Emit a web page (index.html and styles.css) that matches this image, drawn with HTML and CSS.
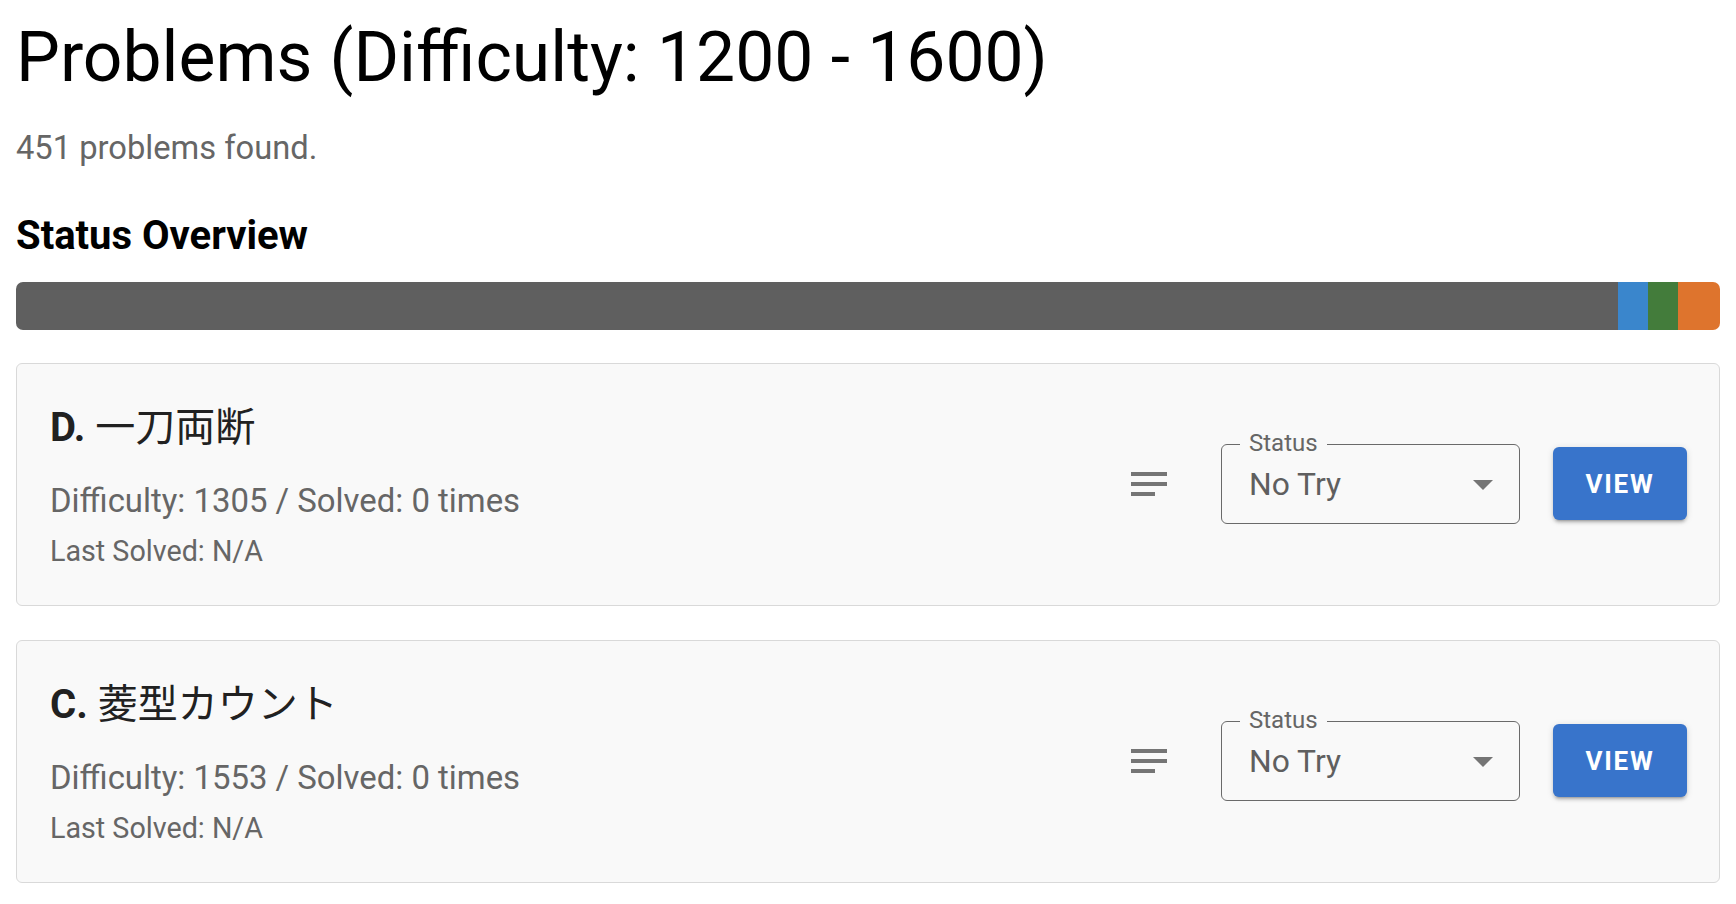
FILE: index.html
```html
<!DOCTYPE html>
<html lang="ja">
<head>
<meta charset="utf-8">
<title>Problems</title>
<link rel="stylesheet" href="styles.css">
</head>
<body>
<main class="page">
  <h1 class="page-title">Problems (Difficulty: 1200 - 1600)</h1>
  <p class="found">451 problems found.</p>
  <h2 class="section-title">Status Overview</h2>
  <div class="status-bar">
    <div class="seg seg-notry" style="width:94.01%"></div>
    <div class="seg seg-blue" style="width:1.77%"></div>
    <div class="seg seg-green" style="width:1.77%"></div>
    <div class="seg seg-orange" style="width:2.45%"></div>
  </div>

  <div class="card">
    <div class="card-info">
      <div class="card-title"><span class="pid">D.</span> 一刀両断</div>
      <div class="card-meta">Difficulty: 1305 / Solved: 0 times</div>
      <div class="card-last">Last Solved: N/A</div>
    </div>
    <div class="card-actions">
      <span class="notes-icon">
        <svg viewBox="0 0 24 24" width="48" height="48"><path d="M3 18h12v-2H3v2zM3 6v2h18V6H3zm0 7h18v-2H3v2z" fill="#757575"/></svg>
      </span>
      <div class="select">
        <span class="select-label">Status</span>
        <span class="select-value">No Try</span>
        <span class="select-arrow"></span>
      </div>
      <button class="view-btn">VIEW</button>
    </div>
  </div>

  <div class="card">
    <div class="card-info">
      <div class="card-title"><span class="pid">C.</span> 菱型カウント</div>
      <div class="card-meta">Difficulty: 1553 / Solved: 0 times</div>
      <div class="card-last">Last Solved: N/A</div>
    </div>
    <div class="card-actions">
      <span class="notes-icon">
        <svg viewBox="0 0 24 24" width="48" height="48"><path d="M3 18h12v-2H3v2zM3 6v2h18V6H3zm0 7h18v-2H3v2z" fill="#757575"/></svg>
      </span>
      <div class="select">
        <span class="select-label">Status</span>
        <span class="select-value">No Try</span>
        <span class="select-arrow"></span>
      </div>
      <button class="view-btn">VIEW</button>
    </div>
  </div>
</main>
</body>
</html>
```
FILE: styles.css
```css
* { box-sizing: border-box; }
html, body { margin: 0; padding: 0; background: #ffffff; }
body {
  font-family: Roboto, "Noto Sans CJK JP", sans-serif;
  color: #000;
}
.page { padding: 16px 16px 0 16px; }

.page-title {
  margin: 0;
  font-size: 69.6px;
  line-height: 82px;
  font-weight: 400;
  color: #000;
}
.found {
  margin: 30px 0 0 0;
  font-size: 32.7px;
  line-height: 40px;
  color: #666;
}
.section-title {
  margin: 45px 0 0 0;
  font-size: 40px;
  line-height: 46px;
  font-weight: 700;
  color: #000;
}
.status-bar {
  margin-top: 23px;
  height: 48px;
  display: flex;
  border-radius: 7px;
  overflow: hidden;
}
.seg { height: 100%; }
.seg-notry { background: #5f5f5f; }
.seg-blue { background: #3a86cc; }
.seg-green { background: #437c3b; }
.seg-orange { background: #de742d; }

.card {
  margin-top: 33px;
  display: flex;
  align-items: center;
  justify-content: space-between;
  background: #f9f9f9;
  border: 1.5px solid #d9d9d9;
  border-radius: 6px;
  padding: 40px 32px 36px 33px;
}
.card + .card { margin-top: 34px; }

.card-title {
  font-size: 40px;
  line-height: 48px;
  color: #212121;
}
.pid { font-weight: 700; }
.card-meta {
  margin-top: 29px;
  font-size: 32.9px;
  line-height: 40px;
  color: #666;
}
.card-last {
  margin-top: 12px;
  font-size: 28.7px;
  line-height: 36px;
  color: #666;
}

.card-actions {
  display: flex;
  align-items: center;
  margin-bottom: 6px;
}
.notes-icon {
  width: 48px;
  height: 48px;
  display: flex;
}
.select {
  position: relative;
  margin-left: 48px;
  width: 299px;
  height: 80px;
  border: 1.5px solid #6a6a6a;
  border-radius: 6px;
  display: flex;
  align-items: center;
  padding-left: 27px;
}
.select-label {
  position: absolute;
  left: 18px;
  top: -17px;
  padding: 0 9px;
  background: #f9f9f9;
  font-size: 24px;
  line-height: 30px;
  color: #666;
}
.select-value {
  font-size: 31.8px;
  line-height: 40px;
  color: #5f5f5f;
  margin-top: 0;
}
.select-arrow {
  position: absolute;
  right: 26px;
  top: 35px;
  width: 0;
  height: 0;
  border-left: 10px solid transparent;
  border-right: 10px solid transparent;
  border-top: 10px solid #757575;
}
.view-btn {
  margin-left: 33px;
  width: 134px;
  height: 73px;
  border: none;
  border-radius: 6px;
  background: #3874cb;
  color: #fff;
  font-family: Roboto, sans-serif;
  font-size: 26px;
  font-weight: 700;
  letter-spacing: 1.8px;
  box-shadow: 0 4px 2px -3px rgba(0,0,0,.2), 0 3px 3px 0 rgba(0,0,0,.14), 0 1px 7px 0 rgba(0,0,0,.12);
  padding: 0;
}
```
